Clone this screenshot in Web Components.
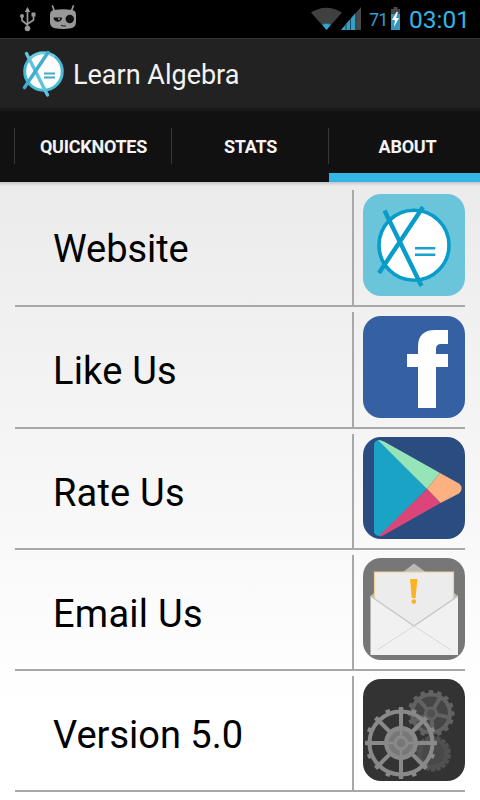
<!DOCTYPE html>
<html lang="en">
<head>
<meta charset="utf-8">
<title>Learn Algebra</title>
<style>
html,body{margin:0;padding:0;height:100%;overflow:hidden;background:#fff}
body{font-family:Roboto,"Liberation Sans",sans-serif}
</style>
</head>
<body>
<learn-app></learn-app>
<script>
const define = (name, html, setup) => {
  const t = document.createElement('template');
  t.innerHTML = html;
  customElements.define(name, class extends HTMLElement {
    connectedCallback() {
      if (this.shadowRoot) return;
      this.attachShadow({mode: 'open'}).append(t.content.cloneNode(true));
      if (setup) setup(this, this.shadowRoot);
    }
  });
};

define('status-bar', `
<style>
:host{display:flex;height:38px;background:#000;color:#33b5e5;align-items:flex-start;box-sizing:border-box}
svg{display:block;flex:none}
.usb{margin:6px 0 0 19px}
.cid{margin:4px 0 0 12px}
.wifi{margin:6px -2px 0 auto}
.sig{margin:6px 0 0 0}
.pct{font-size:18px;line-height:20px;margin:10px 0 0 7px;width:21px;letter-spacing:-.9px;color:#309fc9}
.bat{margin:7px 0 0 1px}
.clock{font-size:24.500px;line-height:38px;width:61px;margin:1px 10px 0 9px;letter-spacing:0;white-space:nowrap}
</style>
<svg class="usb" width="18" height="27" viewBox="0 0 18 27" fill="#999" stroke="#999"><path d="M8.500 3V23M3 11v3.500l5.500 4.500M14.500 9v5l-6 4" fill="none" stroke-width="1.700"/><path d="M8.500 1l2.800 5H5.700z" stroke="none"/><circle cx="8.500" cy="22.500" r="2.800" stroke="none"/><circle cx="3" cy="10" r="2" stroke="none"/><path d="M12.500 6.500h4v4h-4z" stroke="none"/></svg>
<svg class="cid" width="28" height="26" viewBox="0 0 28 26"><path d="M3.500 2l2.200 6M24.300 2L22 8" stroke="#999" stroke-width="1.700" stroke-linecap="round"/><path d="M1 11Q1 6.500 5 6Q14 4.500 23 6Q27 6.500 27 11V18Q27 23.500 22 24.300Q14 25.500 6 24.300Q1 23.500 1 18z" fill="#999"/><path d="M4.500 13.500h8.500a4.200 4.200 0 0 1-8.500 0z" fill="#111"/><circle cx="20.800" cy="15" r="4.200" fill="#111"/><circle cx="10" cy="15" r="1" fill="#999"/><path d="M12 21.300q2.500 1.200 5 .4" fill="none" stroke="#222" stroke-width="1.200"/></svg>
<svg class="wifi" width="31" height="25" viewBox="0 0 31 25"><path d="M0 6.500Q15 -3 31 6.500L15.500 24z" fill="#404040"/><path d="M11 18.500q4.500-2.700 9 0L15.500 24z" fill="#33a5cf"/><path d="M11.500 18.300q4-2.400 8 0" fill="none" stroke="#1d5e78" stroke-width="1"/></svg>
<svg class="sig" width="22" height="25" viewBox="0 0 22 25"><path d="M1 24L21 1V24z" fill="#484848"/><path d="M1 24L15.500 7V24z" fill="#389fc5"/><path d="M6 18v6M10.500 13v11M15.700 7v17" stroke="#17485a" stroke-width="1"/></svg>
<span class="pct">71</span>
<svg class="bat" width="9" height="23" viewBox="0 0 9 23"><path d="M2.500 0h4v2H9v5H0V2h2.500z" fill="#484848"/><path d="M0 7h9v16H0z" fill="#3497bd"/><path d="M5.500 5L1 13h3l-1 7 5-9H5l2-6z" fill="#fff"/></svg>
<span class="clock">03:01</span>
`);

define('algebra-badge', `
<style>:host{display:block;width:44px;height:50px}svg{display:block}</style>
<svg width="44" height="50" viewBox="0 0 44 50" fill="none" stroke-linecap="round"><circle cx="21.500" cy="22.500" r="18.800" fill="#fcfcfc" stroke="#49bad5" stroke-width="3"/><path d="M8.500 8.500Q20 0 32 7" stroke="#85cfe0" stroke-width="1.500"/><path d="M4.500 4.500L25.500 46" stroke="#60c3da" stroke-width="3.400"/><path d="M26 3.500L2.500 38.500" stroke="#3eaed0" stroke-width="3.400"/><path d="M22 24.500h11M22 28.500h11" stroke="#46a8c2" stroke-width="2" stroke-linecap="butt"/></svg>
`);

define('action-bar', `
<style>
:host{display:flex;height:73px;box-sizing:border-box;border-top:1px solid #343434;background:linear-gradient(#222 0 68px,#1b1b1b 69px,#181818);padding:10px 0 0 22px;align-items:flex-start;color:#f3f3f3}
.t{font-size:27px;line-height:32px;margin:10px 0 0 7px;white-space:nowrap;letter-spacing:0}
</style>
<algebra-badge></algebra-badge><span class="t"><slot></slot></span>
`);

define('tab-item', `
<style>
:host{display:flex;flex:none;width:157px;height:71px;box-sizing:border-box;position:relative;align-items:center;justify-content:center;font-weight:700;font-size:18px;color:#f3f3f3}
:host::before{content:"";position:absolute;left:0;top:17px;width:1px;height:36px;background:#363636}
:host([active])::after{content:"";position:absolute;left:1px;right:0;bottom:0;height:9px;background:#33b5e5}
span{white-space:nowrap;padding-left:2px;letter-spacing:-.25px}
</style><span><slot></slot></span>
`);

define('tab-strip', `
<style>:host{display:flex;height:71px;background:#111;padding-left:14px;overflow:hidden}</style><slot></slot>
`);

const icons = {
web: `<rect width="102" height="102" rx="18" fill="#6ac4da"/><circle cx="51" cy="51.300" r="35" fill="#fff" stroke="#089cca" stroke-width="3.600"/><path d="M21.500 16.500L58.500 92M60 13L16 79" stroke="#089cca" stroke-width="4.400"/><path d="M52 54.200h20.300M52 60.700h20.300" stroke="#17a3cd" stroke-width="2.600"/>`,
like: `<rect width="102" height="102" rx="18" fill="#3560a2"/><path d="M55 92V51H44V38h11V31Q55 14 72 14H85V28H78Q73 28 73 33V38H85V51H73V92z" fill="#fff"/>`,
rate: `<rect width="102" height="102" rx="18" fill="#2a4c7f"/><path d="M11 7Q12 3 17 3L64 52 17 99Q12 99 11 95z" fill="#1ba3c6"/><path d="M15 3Q17 2.500 21 4.500L77 36 64 52z" fill="#96e4b8"/><path d="M77 36L96 46.500Q101.500 51 96 56.500L77.500 66 64 52z" fill="#fdb080"/><path d="M64 52L77.500 66 21 98Q18 100 16 99z" fill="#dc4579"/>`,
mail: `<rect width="102" height="102" rx="18" fill="#777"/><path d="M40 14L51 5.500 62.500 14zM7.500 38L11.500 34.500V41zM95 38L90.500 34.500V41z" fill="#b9b9b9"/><path d="M11.500 14h79V41L51 69 11.500 41z" fill="#ececec"/><path d="M11.500 41V14h79V41" fill="none" stroke="#e9cf98" stroke-width="1.200"/><path d="M7.500 38L51 68 95 38V97H7.500z" fill="#f1f1f1"/><path d="M7.500 38L51 68 95 38" fill="none" stroke="#c4c4c4" stroke-width="1.200"/><path d="M51 68L14 92M51 68L88 92" stroke="#d8d8d8" stroke-width="1"/><path d="M47 21h7.400L52.600 40h-3.800z" fill="#fbb323"/><circle cx="50.800" cy="43.600" r="2.400" fill="#fbb323"/>`
};
/* Toothed ring with spokes around (x,y). */
const gear = (x, y, r, w, teeth, spokes, color, offset) => {
  let s = `<circle cx="${x}" cy="${y}" r="${r - w / 2}" fill="none" stroke="${color}" stroke-width="${w}"/>`;
  for (let i = 0; i < teeth; i++) s += `<rect x="${x - 2.3}" y="${y - r - 2.5}" width="4.600" height="4" rx=".7" fill="${color}" transform="rotate(${i * 360 / teeth} ${x} ${y})"/>`;
  for (let i = 0; i < spokes; i++) s += `<path d="M${x} ${y}V${y - r + 1}" stroke="${color}" stroke-width="4" transform="rotate(${i * 360 / spokes + offset} ${x} ${y})"/>`;
  return s;
};
icons.version = `<rect width="102" height="102" rx="18" fill="#333"/><circle cx="70" cy="74.500" r="15" fill="#484848"/>${gear(70, 74.5, 15.5, 4, 18, 0, '#505050', 0)}<circle cx="68" cy="34.500" r="19" fill="#454545"/>${gear(68, 34.5, 21, 4, 16, 5, '#626262', 30)}<circle cx="68" cy="34.500" r="7" fill="#626262"/><circle cx="68" cy="34.500" r="4" fill="#515151"/>${gear(38, 64, 33.5, 4, 16, 8, '#898989', 0)}<circle cx="38" cy="64" r="17" fill="#898989"/><circle cx="38" cy="64" r="10" fill="none" stroke="#787878" stroke-width="5"/><path d="M24 64H52M38 50V78" stroke="#898989" stroke-width="2.400"/><circle cx="38" cy="64" r="5" fill="#777" stroke="#898989" stroke-width="1.500"/>`;

define('app-icon', `<style>:host{display:block;width:102px;height:102px}svg{display:block}</style><svg width="102" height="102" viewBox="0 0 102 102"></svg>`,
 (h, r) => { r.querySelector('svg').innerHTML = icons[h.getAttribute('kind')]; });

define('menu-row', `
<style>
:host{display:grid;grid-template-columns:337px 1fr;height:116px;box-sizing:border-box;border-bottom:2px solid #a8a8a8;color:#000}
:host([tall]){height:117px}
.l{display:flex;align-items:center;padding-left:38px;font-size:38px;line-height:44px;white-space:nowrap;padding-top:3px}
.r{border-left:2px solid #a8a8a8;padding:3px 0 0 9px}
:host([tall]) .r{padding-top:4px}
</style>
<div class="l"><span><slot></slot></span></div><div class="r"></div>
`, (h, r) => {
  r.querySelector('.r').innerHTML = `<app-icon kind="${h.getAttribute('icon')}"></app-icon>`;
  r.querySelector('span').style.letterSpacing = h.getAttribute('spacing') || '0';
});

define('menu-list', `
<style>:host{display:flex;flex-direction:column;gap:5px;flex:1;box-sizing:border-box;padding:8px 15px 0;background:linear-gradient(rgba(0,0,0,.16),transparent 4px),linear-gradient(#ebebeb,#fff 85%)}</style><slot></slot>
`);

define('learn-app', `
<style>:host{display:flex;flex-direction:column;width:480px;height:800px;overflow:hidden}</style>
<status-bar></status-bar>
<action-bar>Learn Algebra</action-bar>
<tab-strip><tab-item>QUICKNOTES</tab-item><tab-item>STATS</tab-item><tab-item active>ABOUT</tab-item></tab-strip>
<menu-list>
<menu-row tall icon="web" spacing="-.05px">Website</menu-row>
<menu-row tall icon="like" spacing=".2px">Like Us</menu-row>
<menu-row icon="rate" spacing=".2px">Rate Us</menu-row>
<menu-row icon="mail" spacing=".25px">Email Us</menu-row>
<menu-row icon="version">Version 5.0</menu-row>
</menu-list>
`);
</script>
</body>
</html>
